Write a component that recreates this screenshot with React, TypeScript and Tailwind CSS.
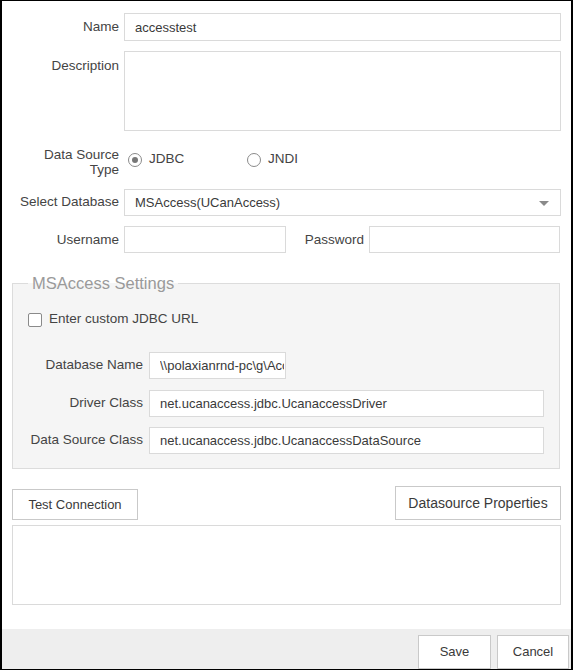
import React from "react";

const inputCls =
  "h-[27px] border border-[#dadada] bg-white pl-[10px] pr-[1px] text-[13px] text-[#3a3a3a] outline-none";

const Label = ({ children, className = "" }: { children: React.ReactNode; className?: string }) => (
  <label className={`text-right text-[13.5px] text-[#444] ${className}`}>{children}</label>
);

const Radio = ({ checked, label, className = "" }: { checked?: boolean; label: string; className?: string }) => (
  <div className={`flex items-center ${className}`}>
    <span className="flex h-[14px] w-[14px] items-center justify-center rounded-full border-[1.5px] border-[#8a8a8a] bg-white">
      {checked && <span className="h-[6px] w-[6px] rounded-full bg-[#777]" />}
    </span>
    <span className="ml-[7px] text-[13.5px] text-[#444]">{label}</span>
  </div>
);

const Button = ({ children, className = "" }: { children: React.ReactNode; className?: string }) => (
  <button className={`border border-[#c9c9c9] bg-white text-[13px] text-[#3a3a3a] ${className}`}>{children}</button>
);

export default function App() {
  return (
    <div className="flex h-[670px] w-[573px] flex-col border-x-2 border-y border-black bg-white font-['Liberation_Sans',Arial,sans-serif] text-[#3a3a3a]">
      {/* name */}
      <div className="mt-[12px] flex items-center">
        <Label className="w-[122px] pr-[5px]">Name</Label>
        <input readOnly value="accesstest" className={`${inputCls} h-[28px] w-[437px]`} />
      </div>

      {/* description */}
      <div className="mt-[10px] flex items-start">
        <Label className="w-[122px] pr-[5px] pt-[5px]">Description</Label>
        <textarea readOnly className="h-[80px] w-[437px] resize-none border border-[#dadada] bg-white outline-none" />
      </div>

      {/* data source type */}
      <div className="mt-[16px] flex items-start">
        <Label className="w-[122px] pr-[5px] leading-[15px]">
          Data Source
          <br />
          Type
        </Label>
        <div className="mt-[5px] flex h-[15px] items-center pl-[4px]">
          <Radio checked label="JDBC" className="w-[119px]" />
          <Radio label="JNDI" />
        </div>
      </div>

      {/* select database */}
      <div className="mt-[12px] flex items-center">
        <Label className="w-[122px] pr-[5px]">Select Database</Label>
        <div className="relative flex h-[27px] w-[437px] items-center border border-[#dadada] bg-white pl-[10px] text-[13px]">
          MSAccess(UCanAccess)
          <span className="absolute right-[11px] top-[11px] h-0 w-0 border-x-[5px] border-t-[5px] border-x-transparent border-t-[#8a8a8a]" />
        </div>
      </div>

      {/* username / password */}
      <div className="mt-[10px] flex items-center">
        <Label className="w-[122px] pr-[5px] pt-[1px]">Username</Label>
        <input readOnly className={`${inputCls} w-[162px]`} />
        <Label className="w-[83px] pr-[5px] pt-[1px]">Password</Label>
        <input readOnly type="password" className={`${inputCls} w-[191px]`} />
      </div>

      {/* msaccess settings */}
      <fieldset className="ml-[10px] mt-[20px] w-[548px] border border-[#dcdcdc] bg-[#f5f5f5] pb-[14px]">
        <legend className="ml-[15px] px-[4px] text-[16.5px] leading-[20px] text-[#9a9a9a]">MSAccess Settings</legend>

        <div className="ml-[15px] mt-[19px] flex h-[15px] items-center">
          <span className="h-[14px] w-[14px] rounded-[2px] border border-[#8a8a8a] bg-white" />
          <span className="ml-[7px] text-[13.5px] text-[#444]">Enter custom JDBC URL</span>
        </div>

        <div className="mt-[25px] flex items-center">
          <Label className="w-[136px] pr-[6px]">Database Name</Label>
          <input readOnly value={"\\\\polaxianrnd-pc\\g\\AccessDB\\test.accdb"} className={`${inputCls} w-[137px]`} />
        </div>
        <div className="mt-[11px] flex items-center">
          <Label className="w-[136px] pr-[6px]">Driver Class</Label>
          <input readOnly value="net.ucanaccess.jdbc.UcanaccessDriver" className={`${inputCls} w-[395px]`} />
        </div>
        <div className="mt-[10px] flex items-center">
          <Label className="w-[136px] pr-[6px]">Data Source Class</Label>
          <input readOnly value="net.ucanaccess.jdbc.UcanaccessDataSource" className={`${inputCls} w-[395px]`} />
        </div>
      </fieldset>

      {/* test connection */}
      <div className="mx-[10px] mt-[17px] flex items-end justify-between">
        <Button className="h-[31px] w-[126px]">Test Connection</Button>
        <Button className="h-[34px] w-[166px] text-[14px]">Datasource Properties</Button>
      </div>
      <div className="mx-[10px] mt-[5px] h-[80px] border border-[#dadada] bg-white" />

      {/* footer */}
      <div className="mt-auto flex h-[40px] items-end justify-end gap-[6px] bg-[#eeeeee] pr-[2px]">
        <Button className="h-[34px] w-[73px]">Save</Button>
        <Button className="h-[34px] w-[72px]">Cancel</Button>
      </div>
    </div>
  );
}
